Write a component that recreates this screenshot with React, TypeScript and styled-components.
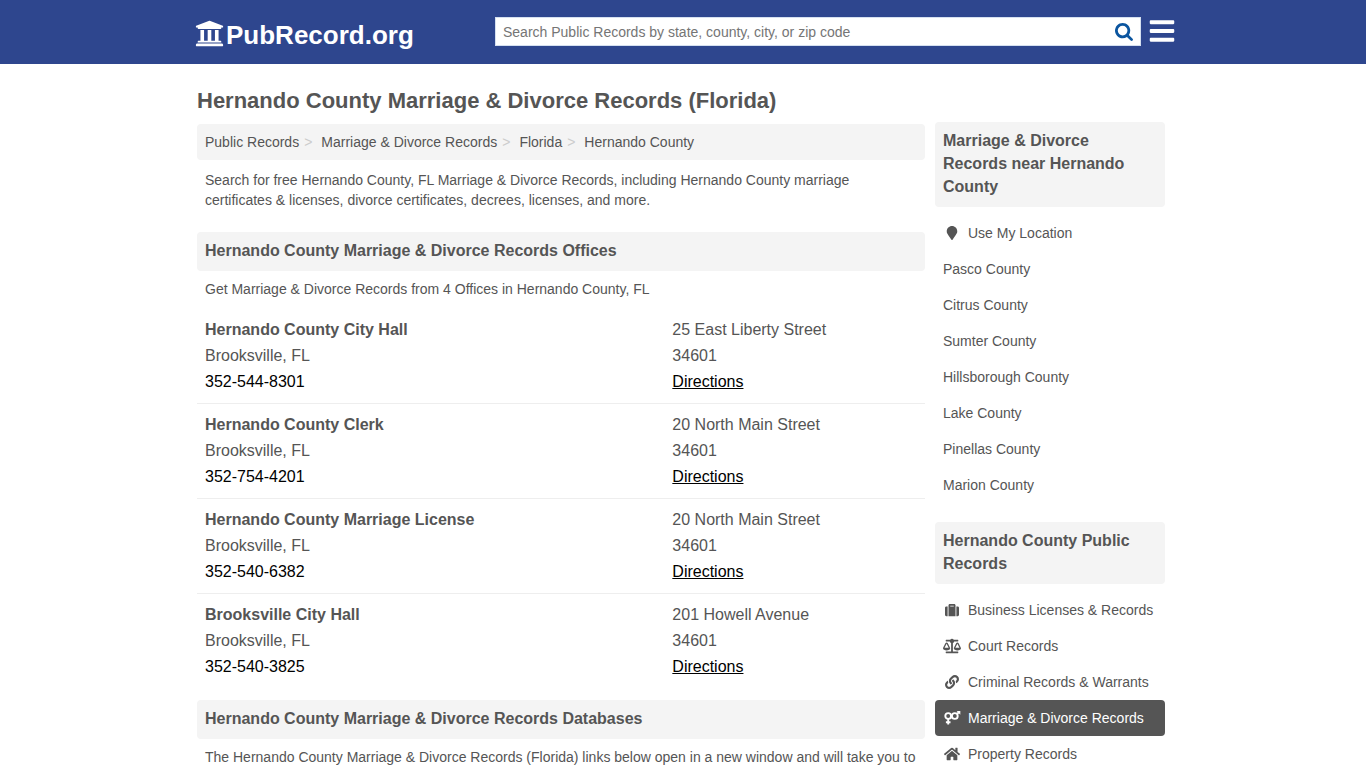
import React from "react";
import styled, { createGlobalStyle } from "styled-components";
import { FaUniversity, FaBars, FaMapMarker, FaSuitcase, FaBalanceScale, FaLink, FaHome } from "react-icons/fa";

const GlobalStyle = createGlobalStyle`
  *, *::before, *::after { box-sizing: border-box; }
  body {
    margin: 0;
    background: #fff;
    color: #555;
    font-family: "Liberation Sans", Arial, sans-serif;
    font-size: 14px;
    line-height: 20px;
  }
  a { color: inherit; text-decoration: none; }
  h1, h2, p, ul, ol { margin: 0; padding: 0; }
  ul, ol { list-style: none; }
`;

const Header = styled.header`
  background: #2e468e;
`;

const HeaderInner = styled.div`
  display: grid;
  grid-template-columns: 300px 1fr auto;
  align-items: center;
  max-width: 986px;
  height: 64px;
  margin: 0 auto;
  padding: 0 0 1px 5px;
`;

const Logo = styled.a`
  display: flex;
  align-items: center;
  gap: 2px;
  padding-top: 7px;
  color: #fff;
  font-size: 26px;
  font-weight: bold;
  line-height: 32px;
  svg { margin-bottom: 3px; }
`;

const SearchForm = styled.form`
  display: flex;
  height: 29px;
  padding-top: 1px;
  background: #fff;
  border: 1px solid #d5e0f0;
`;

const SearchInput = styled.input`
  flex: 1;
  min-width: 0;
  padding: 0 7px;
  border: 0;
  outline: 0;
  background: transparent;
  color: #555;
  font: inherit;
  &::placeholder { color: #757575; opacity: 1; }
`;

const IconButton = styled.button`
  display: flex;
  align-items: center;
  padding: 0;
  border: 0;
  background: none;
  cursor: pointer;
`;

const SearchButton = styled(IconButton)`
  padding: 0 7px;
  color: #0b559f;
`;

const MenuButton = styled(IconButton)`
  margin-left: 7px;
  padding-bottom: 2px;
  color: #fff;
  font-size: 28px;
`;

const Page = styled.div`
  max-width: 984px;
  margin: 0 auto;
  padding: 23px 10px 0 6px;
`;

const Title = styled.h1`
  font-size: 22px;
  line-height: 28px;
`;

const Columns = styled.div`
  display: flex;
  align-items: flex-start;
  gap: 10px;
  margin-top: 7px;
`;

const Main = styled.main`
  flex: 1;
  min-width: 0;
  padding-top: 2px;
`;

const Sidebar = styled.aside`
  flex: 0 0 230px;
`;

const Breadcrumb = styled.ol`
  display: flex;
  padding: 8px;
  border-radius: 4px;
  background: #f4f4f4;
`;

const Crumb = styled.li`
  & + &::before {
    content: ">";
    padding: 0 9px 0 5px;
    color: #ccc;
  }
`;

const Intro = styled.p`
  padding: 10px 8px 22px;
`;

const Heading = styled.h2`
  padding: 7px 8px 9px;
  border-radius: 4px;
  background: #f4f4f4;
  font-size: 16px;
  line-height: 23px;
`;

const Note = styled.p`
  padding: 8px 8px 10px;
`;

const OfficeList = styled.ul`
  margin-bottom: 12px;
`;

const Office = styled.li`
  display: grid;
  grid-template-columns: 2fr 1fr;
  padding: 8px 15px 8px 0;
  font-size: 16px;
  line-height: 26px;
  & + & { border-top: 1px solid #eee; }
`;

const OfficeCell = styled.div<{ $inset?: boolean }>`
  display: flex;
  flex-direction: column;
  align-items: flex-start;
  padding-left: ${(p) => (p.$inset ? "8px" : "0")};
`;

const ActionLink = styled.a<{ $underline?: boolean }>`
  color: #000;
  text-decoration: ${(p) => (p.$underline ? "underline" : "none")};
`;

const SideList = styled.ul`
  margin: 8px 0 19px;
`;

const SideLink = styled.a<{ $active?: boolean }>`
  display: flex;
  align-items: center;
  gap: 7px;
  padding: 8px;
  border-radius: 4px;
  background: ${(p) => (p.$active ? "#555" : "transparent")};
  color: ${(p) => (p.$active ? "#fff" : "inherit")};
  white-space: nowrap;
`;

const SideIcon = styled.span`
  display: flex;
  justify-content: center;
  flex: 0 0 18px;
`;

const SearchIcon = () => (
  <svg width="18" height="18" viewBox="64 128 1664 1664" fill="currentColor" aria-hidden="true">
    <path d="M1216 832q0-185-131.5-316.5T768 384 451.5 515.5 320 832t131.5 316.5T768 1280t316.5-131.5T1216 832zm512 832q0 52-38 90t-90 38q-54 0-90-38l-343-342q-179 124-399 124-143 0-273.5-55.5t-225-150-150-225T64 832t55.5-273.5 150-225 225-150T768 128t273.5 55.5 225 150 150 225T1472 832q0 220-124 399l343 343q37 37 37 90z" />
  </svg>
);

const CoupleIcon = () => (
  <svg width="17" height="14" viewBox="0 0 17 14" fill="none" stroke="currentColor" strokeWidth="1.9" aria-hidden="true">
    <circle cx="4.2" cy="5" r="2.9" />
    <circle cx="10.8" cy="5" r="2.9" />
    <path d="M4.2 8v5.6M1.9 11.2h4.6M12.9 3l2.4-2" />
    <path d="M12.6 0h3.7v3.7z" fill="currentColor" stroke="none" />
  </svg>
);

const offices = [
  { name: "Hernando County City Hall", phone: "352-544-8301", street: "25 East Liberty Street" },
  { name: "Hernando County Clerk", phone: "352-754-4201", street: "20 North Main Street" },
  { name: "Hernando County Marriage License", phone: "352-540-6382", street: "20 North Main Street" },
  { name: "Brooksville City Hall", phone: "352-540-3825", street: "201 Howell Avenue" },
];

const counties = [
  "Pasco County",
  "Citrus County",
  "Sumter County",
  "Hillsborough County",
  "Lake County",
  "Pinellas County",
  "Marion County",
];

const recordTypes = [
  { label: "Business Licenses & Records", icon: <FaSuitcase size={14} /> },
  { label: "Court Records", icon: <FaBalanceScale size={18} /> },
  { label: "Criminal Records & Warrants", icon: <FaLink size={14} /> },
  { label: "Marriage & Divorce Records", icon: <CoupleIcon />, active: true },
  { label: "Property Records", icon: <FaHome size={16} /> },
];

export default function App() {
  return (
    <>
      <GlobalStyle />
      <Header>
        <HeaderInner>
          <Logo href="#">
            <FaUniversity size={29} />
            PubRecord.org
          </Logo>
          <SearchForm role="search">
            <SearchInput
              type="text"
              aria-label="Search Public Records"
              placeholder="Search Public Records by state, county, city, or zip code"
            />
            <SearchButton type="submit" aria-label="Search">
              <SearchIcon />
            </SearchButton>
          </SearchForm>
          <MenuButton type="button" aria-label="Menu">
            <FaBars />
          </MenuButton>
        </HeaderInner>
      </Header>
      <Page>
        <Title>Hernando County Marriage &amp; Divorce Records (Florida)</Title>
        <Columns>
          <Main>
            <nav aria-label="Breadcrumb">
              <Breadcrumb>
                {["Public Records", "Marriage & Divorce Records", "Florida", "Hernando County"].map((c) => (
                  <Crumb key={c}>
                    <a href="#">{c}</a>
                  </Crumb>
                ))}
              </Breadcrumb>
            </nav>
            <Intro>
              Search for free Hernando County, FL Marriage &amp; Divorce Records, including Hernando County
              marriage certificates &amp; licenses, divorce certificates, decrees, licenses, and more.
            </Intro>
            <Heading>Hernando County Marriage &amp; Divorce Records Offices</Heading>
            <Note>Get Marriage &amp; Divorce Records from 4 Offices in Hernando County, FL</Note>
            <OfficeList>
              {offices.map((o) => (
                <Office key={o.name}>
                  <OfficeCell $inset>
                    <strong>{o.name}</strong>
                    <span>Brooksville, FL</span>
                    <ActionLink href={`tel:${o.phone}`}>{o.phone}</ActionLink>
                  </OfficeCell>
                  <OfficeCell>
                    <span>{o.street}</span>
                    <span>34601</span>
                    <ActionLink href="#" $underline>
                      Directions
                    </ActionLink>
                  </OfficeCell>
                </Office>
              ))}
            </OfficeList>
            <Heading>Hernando County Marriage &amp; Divorce Records Databases</Heading>
            <Note>
              The Hernando County Marriage &amp; Divorce Records (Florida) links below open in a new window and
              will take you to
            </Note>
          </Main>
          <Sidebar>
            <Heading>Marriage &amp; Divorce Records near Hernando County</Heading>
            <SideList>
              <li>
                <SideLink href="#">
                  <SideIcon>
                    <FaMapMarker />
                  </SideIcon>
                  Use My Location
                </SideLink>
              </li>
              {counties.map((c) => (
                <li key={c}>
                  <SideLink href="#">{c}</SideLink>
                </li>
              ))}
            </SideList>
            <Heading>Hernando County Public Records</Heading>
            <SideList>
              {recordTypes.map(({ label, icon, active }) => (
                <li key={label}>
                  <SideLink href="#" $active={active}>
                    <SideIcon>{icon}</SideIcon>
                    {label}
                  </SideLink>
                </li>
              ))}
            </SideList>
          </Sidebar>
        </Columns>
      </Page>
    </>
  );
}
